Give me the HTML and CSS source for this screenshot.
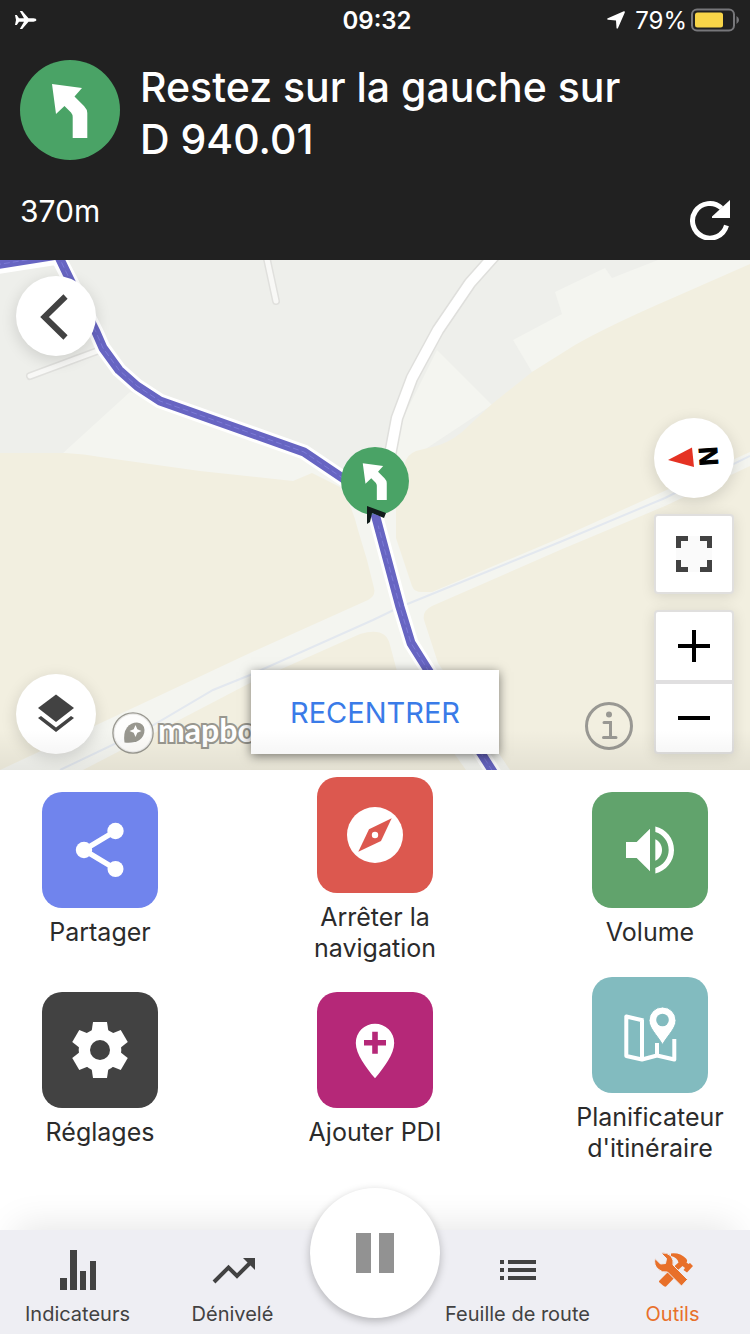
FILE: index.html
```html
<!DOCTYPE html>
<html lang="fr">
<head>
  <meta charset="UTF-8">
  <meta name="viewport" content="width=device-width, initial-scale=1">
  <title>Navigation</title>
  <link rel="stylesheet" href="styles.css">
</head>
<body>

  <svg width="0" height="0" class="defs" aria-hidden="true">
    <symbol id="turn-left" viewBox="0 0 100 100">
      <circle cx="50" cy="50" r="50" fill="#4aa366"/>
      <path d="M32 24L62 28L54.500 36.500L64 46Q67.300 49.500 67.300 53V78H52.700V57Q52.700 54.500 51 52.500L44.500 46L36 54Z" fill="#fff"/>
    </symbol>
  </svg>

  <header class="header">
    <div class="status">
      <svg class="plane" viewBox="0 0 22 20" aria-label="Mode avion"><path d="M0 5h1.800L4 8.300h5L4.800 1h2.400l6.300 7.300h5q3 .3 3 1.700t-3 1.700h-5L7.200 19H4.800L9 11.700H4L1.800 15H0l1-5z" fill="#fff"/></svg>
      <span class="clock">09:32</span>
      <span class="power">
        <svg width="18" height="18" viewBox="0 0 18 18"><path d="M16.800.2Q18.200 0 17.800 1.400L11 17Q10 18.500 9.500 17L9 9.500L1 8.800Q-.5 8 .8 7.200Z" fill="#fff"/></svg>
        79%
        <svg class="battery" width="48" height="24" viewBox="0 0 48 24"><rect x="1" y="1.500" width="42" height="21" rx="5" fill="none" stroke="#77777a" stroke-width="2"/><rect x="4" y="4.500" width="28" height="15" rx="2.500" fill="#f8d548"/><path d="M45.500 8v8q2.500-1.500 2.500-4t-2.500-4z" fill="#77777a"/></svg>
      </span>
    </div>

    <div class="maneuver">
      <svg class="maneuver-icon"><use href="#turn-left"/></svg>
      <h1>Restez sur la gauche sur<br>D 940.01</h1>
    </div>

    <div class="distance">
      <span>370m</span>
      <button class="reload" aria-label="Recalculer">
        <svg viewBox="0 0 40 40"><path d="M31.500 8A17.300 17.300 0 1 0 36.500 25.500" fill="none" stroke="#fff" stroke-width="5"/><path d="M40 0V18H22V16.500Z" fill="#fff"/></svg>
      </button>
    </div>
  </header>

  <main class="map">
    <svg class="map-canvas" viewBox="0 260 750 510" preserveAspectRatio="xMidYMid slice">
      <rect y="260" width="750" height="510" fill="#eeefeb"/>
      <!-- open ground -->
      <g fill="#f4f5f0">
        <path d="M130 392L62 454V770H520L440 600L400 480L345 480L303 455L160 403Z"/>
        <path d="M437 350L492 405L412 458L400 500H375L392 440Z"/>
        <path d="M513 340L562 314L555 292L605 268L612 278L658 260H750V275L532 372Z"/>
        <path d="M0 765L400 595L750 445V475L400 640L150 770H0Z"/>
      </g>
      <!-- fields -->
      <g fill="#f2efe0">
        <path d="M0 453L65 453Q85 454 100 457L200 471L293 481L312 473L340 487Q352 505 358 530L367 560L374 588Q376 596 368 600L250 653L150 700L0 770Z"/>
        <path d="M750 264L675 297Q610 325 575 345L532 372L492 404L462 432Q450 442 436 446L416 451Q406 455 405 464L396 508V538L412 586Q414 592 422 592H432L560 538L660 493L750 452Z"/>
        <path d="M750 466L665 506L560 550L432 606Q422 611 424 620L438 663L510 770H750Z"/>
        <path d="M83 770L160 730L250 683L360 634Q386 626 390 645L398 675L466 770Z"/>
      </g>
      <!-- streams -->
      <path d="M60 770L150 727L213 690L250 675L373 620L400 607L560 542L665 498L750 456" fill="none" stroke="#e3e8ef" stroke-width="2"/>
      <!-- roads -->
      <g fill="none" stroke-linecap="round" stroke-linejoin="round">
        <path d="M265 250L276 301M30 376L100 350" stroke="#e0e0dd" stroke-width="8"/>
        <path d="M265 250L276 301M30 376L100 350" stroke="#f8f8f6" stroke-width="5"/>
        <path d="M494 256L470 283L438 330L412 378L397 418L390 455" stroke="#dfdfdc" stroke-width="13"/>
        <path d="M494 256L470 283L438 330L412 378L397 418L390 455" stroke="#fff" stroke-width="10"/>
      </g>
      <!-- route -->
      <g fill="none" stroke-linejoin="round">
        <path d="M-5 267L58 257L70 280L96 332L103 348L119 370L137 386L160 401L304 452L350 483L374 510L400 607L411 643L428 670L495 775" stroke="#fff" stroke-width="15"/>
        <path d="M-5 265L58 255L70 280L96 332L103 348L119 370L137 386L160 401L304 452L350 483L374 510L400 607L411 643L428 670L495 775" stroke="#6765c2" stroke-width="9"/>
        <path d="M-5 265L58 255L70 280L96 332L103 348L119 370L137 386L160 401L304 452L350 483L374 510L400 607L411 643L428 670L495 775" stroke="#7c7ad6" stroke-width="1" stroke-dasharray="6 3"/>
      </g>
      <use href="#turn-left" x="341" y="447" width="68" height="68"/>
      <path d="M367 506L386 513L384 518L372 513L370 522L367 524Z" fill="#111c1a"/>
      <path d="M372 513L379 516L382 525L376 526Z" fill="#6765c2"/>
    </svg>

    <button class="round back" aria-label="Retour">
      <svg viewBox="0 0 80 80"><path d="M49.500 20.500L28.500 41L49.500 61.500" fill="none" stroke="#424242" stroke-width="6"/></svg>
    </button>

    <div class="map-left">
      <button class="round" aria-label="Couches">
        <svg viewBox="0 0 80 80" fill="#424242"><path d="M40 20.500L58 34L40 48L22 34Z"/><path d="M22 44L25 42L40 53.500L55 42L58 44L40 58Z"/></svg>
      </button>
      <a class="mapbox" href="#">
        <svg viewBox="0 0 42 42"><circle cx="21" cy="21" r="19.500" fill="#fff" fill-opacity=".8" stroke="#98978f" stroke-width="2.500"/><path d="M12.500 30.500Q11 21 15 15.500Q19 10.500 25 10.500Q32 11 32.500 18Q32.500 24 27.500 28Q22 31.500 12.500 30.500Z" fill="#98978f"/><path d="M23.500 13L25.300 17.200L29.500 19L25.300 20.800L23.500 25L21.700 20.800L17.500 19L21.700 17.200Z" fill="#fff"/></svg>
        <span>mapbox</span>
      </a>
    </div>

    <button class="recenter">RECENTRER</button>

    <div class="map-right">
      <button class="info" aria-label="Informations">
        <svg viewBox="0 0 48 48" fill="none" stroke="#999893" stroke-width="3"><circle cx="24" cy="24" r="22.500"/><circle cx="24" cy="12.500" r="3" fill="#999893" stroke="none"/><path d="M19 20.500H25.500V35M18.500 35.500H31" stroke-linecap="round"/></svg>
      </button>
      <div class="controls">
        <button class="round" aria-label="Orienter au nord">
          <svg viewBox="0 0 80 80"><path d="M14 42L38 29.500L40 49Z" fill="#e53223"/><text x="0" y="0" transform="translate(64 47) rotate(-94)" class="north">N</text></svg>
        </button>
        <button class="square" aria-label="Plein écran">
          <svg viewBox="0 0 36 36"><rect width="36" height="36" fill="#fafafa"/><path d="M2.500 12V2.500H12M24 2.500H33.500V12M33.500 24V33.500H24M12 33.500H2.500V24" fill="none" stroke="#424242" stroke-width="5"/></svg>
        </button>
        <div class="zoom">
          <button aria-label="Zoom avant"><svg viewBox="0 0 32 32"><path d="M0 16H32M16 0V32" stroke="#000" stroke-width="4"/></svg></button>
          <button aria-label="Zoom arrière"><svg viewBox="0 0 32 32"><path d="M0 16H32" stroke="#000" stroke-width="4"/></svg></button>
        </div>
      </div>
    </div>
  </main>

  <section class="tools">
    <button class="tool">
      <svg class="tile share" viewBox="0 0 116 116" fill="#fff"><path d="M73.500 39L42 58L73.500 77" fill="none" stroke="#fff" stroke-width="5.500"/><circle cx="42" cy="58" r="8.200"/><circle cx="73.500" cy="39" r="8.200"/><circle cx="73.500" cy="77" r="8"/></svg>
      <span>Partager</span>
    </button>
    <button class="tool">
      <svg class="tile stop" viewBox="0 0 116 116" fill="#fff"><circle cx="58" cy="58" r="28"/><path d="M74.700 41.300L64 64L41.300 74.700L52 52.300Z" fill="#dc584f"/><circle cx="58" cy="58" r="3.200"/></svg>
      <span>Arrêter la navigation</span>
    </button>
    <button class="tool">
      <svg class="tile volume" viewBox="0 0 116 116"><g fill="#fff" transform="translate(26 26) scale(2.667)"><path d="M3 9v6h4l5 5V4L7 9H3z"/><path d="M16.500 12c0-1.770-1.020-3.290-2.500-4.030v8.050c1.480-.73 2.500-2.250 2.500-4.020z"/><path d="M14 3.230v2.060c2.890.86 5 3.540 5 6.710s-2.110 5.850-5 6.710v2.060c4.010-.91 7-4.490 7-8.770s-2.990-7.860-7-8.770z"/></g></svg>
      <span>Volume</span>
    </button>
    <button class="tool">
      <svg class="tile settings" viewBox="0 0 116 116">
        <g transform="translate(58 58)" fill="#fff">
          <circle r="21.300"/>
          <path id="cog" d="M-7 -28H7L8.500 -18V18L7 28H-7L-8.500 18V-18Z"/>
          <use href="#cog" transform="rotate(60)"/>
          <use href="#cog" transform="rotate(120)"/>
          <circle r="10" fill="#424242"/>
        </g>
      </svg>
      <span>Réglages</span>
    </button>
    <button class="tool">
      <svg class="tile poi" viewBox="0 0 116 116"><path d="M58 31.700A19.200 19.200 0 0 1 77.200 51C77.200 62 67 75.500 58 86.300C49 75.500 38.800 62 38.800 51A19.200 19.200 0 0 1 58 31.700Z" fill="#fff"/><path d="M47 50.800H69M58 39.800V61.800" stroke="#b52878" stroke-width="5.600"/></svg>
      <span>Ajouter PDI</span>
    </button>
    <button class="tool">
      <svg class="tile planner" viewBox="0 0 116 116"><path d="M51.500 43.500L34.300 39.500V79L50 82.500L65 78.500L82.300 82.500V62M50 43V82M65 78V66" fill="none" stroke="#fff" stroke-width="4" stroke-linejoin="round"/><path d="M70.500 30A13.500 13.500 0 0 1 84 43.500C84 51 76 58 70.500 67.500C65 58 57 51 57 43.500A13.500 13.500 0 0 1 70.500 30Z" fill="#fff" stroke="#82bbbf" stroke-width="1"/><circle cx="70.500" cy="43" r="6.300" fill="#82bbbf"/></svg>
      <span>Planificateur d'itinéraire</span>
    </button>
  </section>

  <nav class="tabs">
    <a href="#" class="tab">
      <svg viewBox="0 0 44 44"><path d="M4 30h7v12H4zM14 2h7v40h-7zM24 23h6v19h-6zM34 13h6v29h-6z" fill="#424242"/></svg>
      <span>Indicateurs</span>
    </a>
    <a href="#" class="tab">
      <svg viewBox="0 0 44 44"><path d="M3 34L17.500 19.500L26 28L40 14" fill="none" stroke="#424242" stroke-width="4"/><path d="M32 10H44V22Z" fill="#424242"/></svg>
      <span>Dénivelé</span>
    </a>
    <button class="pause" aria-label="Pause">
      <svg viewBox="0 0 38 40"><path d="M0 0h15v40H0zM23 0h15v40H23z" fill="#929292"/></svg>
    </button>
    <a href="#" class="tab">
      <svg viewBox="0 0 44 44"><path d="M4 12h4v4H4zM12 12h28v4H12zM4 20h4v4H4zM12 20h28v4H12zM4 28h4v4H4zM12 28h28v4H12z" fill="#424242"/></svg>
      <span>Feuille de route</span>
    </a>
    <a href="#" class="tab active">
      <svg viewBox="0 0 44 44" fill="#e8702a"><path d="M8 33L22 19L29 24L15 38.500Q13.500 39 12 37.500L8 34Z"/><path d="M20 5.500Q29 4.500 35 10.500Q37 12.500 35.500 14.500L37.500 16L39 15L42 18L36 24.500L32.500 22L34 20L31.500 18L27 22L22.500 19L27.500 14.500Q26.500 9.500 20 8Z"/><path d="M10 5Q16 4 20 8Q23 12 22 17L36.500 31.500L30.500 38L16.500 24Q11 25 7 21Q2.500 17 4 10.500L9.500 16L14.500 15.500L15.500 10.500Z" stroke="#eeeef3" stroke-width="1"/></svg>
      <span>Outils</span>
    </a>
  </nav>

</body>
</html>
```
FILE: styles.css
```css
* { box-sizing: border-box; }
body { margin: 0; min-height: 100vh; display: flex; flex-direction: column; background: #fff; color: #2b2b2b; font-family: Inter, "Liberation Sans", sans-serif; }
button { border: none; padding: 0; background: none; font: inherit; color: inherit; cursor: pointer; }
a { text-decoration: none; color: inherit; }
svg { display: block; }
.defs { position: absolute; }

/* header */
.header { background: #212121; color: #fff; padding-bottom: 20px; }
.status { display: grid; grid-template-columns: 1fr auto 1fr; align-items: center; height: 40px; padding: 0 11px 0 15px; font-size: 24px; }
.plane { width: 22px; height: 20px; }
.clock { font-weight: 600; }
.power { display: flex; align-items: center; justify-content: flex-end; gap: 10px; }
.battery { margin-left: -6px; }
.maneuver { display: flex; align-items: flex-start; gap: 20px; padding: 20px 20px 0; }
.maneuver-icon { width: 100px; height: 100px; flex: none; }
.maneuver h1 { margin: 0; padding-top: 1px; font-size: 41px; line-height: 52px; font-weight: 500; }
.distance { display: flex; justify-content: space-between; align-items: flex-start; padding: 30px 20px 0; font-size: 30px; line-height: 32px; }
.reload { width: 40px; height: 40px; margin-top: 5px; }

/* map */
.map { position: relative; flex: 1; min-height: 500px; overflow: hidden; background: #f2efe0; }
.map-canvas { position: absolute; inset: 0; width: 100%; height: 100%; }
.map::after { content: ""; position: absolute; left: 0; right: 0; bottom: 0; height: 40px; background: linear-gradient(transparent, rgba(0,0,0,0.06)); pointer-events: none; }
.round { width: 80px; height: 80px; border-radius: 50%; background: #fff; box-shadow: 0 4px 16px rgba(0,0,0,0.14); }
.back { position: absolute; top: 16px; left: 16px; }
.map-left { position: absolute; left: 16px; bottom: 16px; display: flex; align-items: flex-end; gap: 16px; }
.mapbox { display: flex; align-items: flex-end; gap: 4px; color: #fff; font: bold 32px/48px Lato, sans-serif; -webkit-text-stroke: 4px #98978f; paint-order: stroke fill; }
.mapbox svg { width: 42px; height: 42px; }
.recenter { position: absolute; bottom: 16px; left: 50%; width: 248px; height: 84px; margin-left: -124px; background: #fff; color: #3a7be8; font-size: 29px; box-shadow: 0 2px 10px rgba(0,0,0,0.5); }
.map-right { position: absolute; right: 16px; bottom: 16px; display: flex; align-items: flex-end; gap: 21px; }
.info { width: 48px; height: 48px; margin-bottom: 4px; }
.controls { display: flex; flex-direction: column; gap: 16px; }
.north { font: bold 26px "Liberation Sans", sans-serif; stroke: #000; stroke-width: 1px; }
.square, .zoom { width: 80px; border: 2px solid #e0dfde; border-radius: 4px; background: #fff; box-shadow: 0 2px 14px rgba(0,0,0,0.12); }
.square { height: 80px; }
.square svg { width: 36px; height: 36px; margin: auto; }
.zoom button { display: block; width: 100%; height: 68px; }
.zoom button + button { height: 72px; border-top: 4px solid #e0dfe0; }
.zoom svg { width: 32px; height: 32px; margin: auto; }

/* tools */
.tools { display: grid; grid-template-columns: 200px 1fr 200px; grid-auto-rows: 200px; justify-items: center; padding-bottom: 60px; }
.tool { display: flex; flex-direction: column; align-items: center; justify-content: center; gap: 9px; width: 180px; font-size: 25px; line-height: 31px; }
.tile { width: 116px; height: 116px; border-radius: 20px; }
.share { background: #7084ed; }
.stop { background: #dc584f; }
.volume { background: #61a36c; }
.settings { background: #424242; }
.poi { background: #b52878; }
.planner { background: #82bbbf; }

/* bottom tabs */
.tabs { position: relative; display: grid; grid-template-columns: 1fr 1fr 130px 1fr 1fr; height: 104px; background: #eeeef3; box-shadow: 0 -20px 36px -16px rgba(0,0,0,0.1); }
.tab { display: flex; flex-direction: column; align-items: center; padding-top: 18px; gap: 10px; color: #424242; font-size: 20px; line-height: 24px; white-space: nowrap; }
.tab svg { width: 44px; height: 44px; }
.active { color: #e8702a; }
.pause { width: 130px; height: 130px; margin-top: -42px; border-radius: 50%; background: #fff; box-shadow: 0 3px 8px rgba(0,0,0,0.25); }
.pause svg { width: 38px; height: 40px; margin: auto; }
```
